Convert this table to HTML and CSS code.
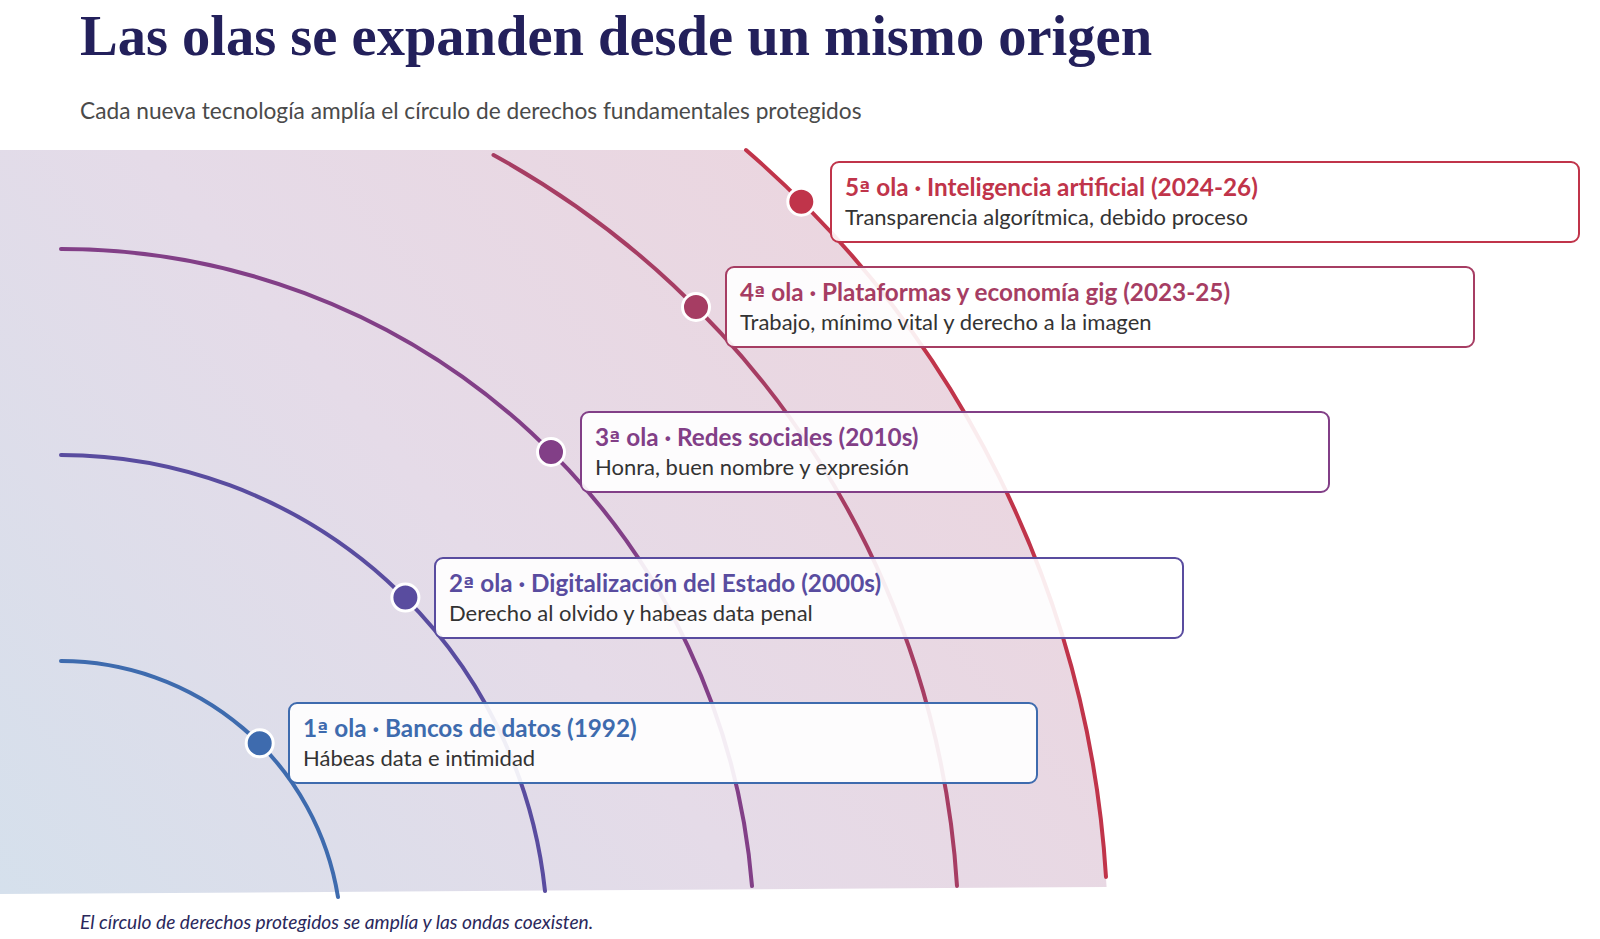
FILE: index.html
```html
<!DOCTYPE html>
<html lang="es">
<head>
<meta charset="utf-8">
<title>Las olas se expanden desde un mismo origen</title>
<link rel="stylesheet" href="styles.css">
</head>
<body>
<div class="page">
  <header class="head">
    <h1 class="title">Las olas se expanden desde un mismo origen</h1>
    <p class="lead">Cada nueva tecnología amplía el círculo de derechos fundamentales protegidos</p>
  </header>

  <div class="chart">
    <svg class="waves" width="1600" height="760" viewBox="0 0 1600 760" xmlns="http://www.w3.org/2000/svg">
      <defs>
        <linearGradient id="bg" gradientUnits="userSpaceOnUse" x1="0" y1="744" x2="900" y2="0">
          <stop offset="0" stop-color="#d5e0ec"/>
          <stop offset="0.5" stop-color="#e5dbe8"/>
          <stop offset="1" stop-color="#ecd5de"/>
        </linearGradient>
      </defs>
      <path d="M0,0 L745.8,0 A1047,1047 0 0,1 1106.6,737 L0,744 Z" fill="url(#bg)"/>
      <g fill="none" stroke-width="4" stroke-linecap="round">
        <path d="M61,511 A281,281 0 0,1 338,747" stroke="#3e6bae"/>
        <path d="M61,305 A487,487 0 0,1 545,741" stroke="#594c9f"/>
        <path d="M61,99 A693,693 0 0,1 752,736" stroke="#823f87"/>
        <path d="M493.5,5 A898,898 0 0,1 957,736" stroke="#a63d63"/>
        <path d="M746,0 A1047,1047 0 0,1 1106,727" stroke="#c0344a"/>
      </g>
      <g stroke="#ffffff" stroke-width="3">
        <circle cx="259.7" cy="593.3" r="13.5" fill="#3e6bae"/>
        <circle cx="405.4" cy="447.6" r="13.5" fill="#594c9f"/>
        <circle cx="551" cy="302" r="13.5" fill="#823f87"/>
        <circle cx="696" cy="157" r="13.5" fill="#a63d63"/>
        <circle cx="801.3" cy="51.7" r="13.5" fill="#c0344a"/>
      </g>
    </svg>

    <div class="card w5">
      <div class="card-title">5<span class="ord">ª</span> ola · Inteligencia artificial (2024-26)</div>
      <div class="card-text">Transparencia algorítmica, debido proceso</div>
    </div>
    <div class="card w4">
      <div class="card-title">4<span class="ord">ª</span> ola · Plataformas y economía gig (2023-25)</div>
      <div class="card-text">Trabajo, mínimo vital y derecho a la imagen</div>
    </div>
    <div class="card w3">
      <div class="card-title">3<span class="ord">ª</span> ola · Redes sociales (2010s)</div>
      <div class="card-text">Honra, buen nombre y expresión</div>
    </div>
    <div class="card w2">
      <div class="card-title">2<span class="ord">ª</span> ola · Digitalización del Estado (2000s)</div>
      <div class="card-text">Derecho al olvido y habeas data penal</div>
    </div>
    <div class="card w1">
      <div class="card-title">1<span class="ord">ª</span> ola · Bancos de datos (1992)</div>
      <div class="card-text">Hábeas data e intimidad</div>
    </div>
  </div>

  <p class="note">El círculo de derechos protegidos se amplía y las ondas coexisten.</p>
</div>
</body>
</html>
```

FILE: styles.css
```css
* {
  box-sizing: border-box;
}

html, body {
  margin: 0;
  padding: 0;
  background: #ffffff;
}

.page {
  width: 1600px;
  height: 939px;
  overflow: hidden;
  font-family: Lato, "Open Sans", "Liberation Sans", sans-serif;
}

.head {
  padding: 4px 0 0 80px;
}

.title {
  margin: 0;
  font-family: "Liberation Serif", "DejaVu Serif", serif;
  font-weight: 700;
  font-size: 56.5px;
  line-height: 64px;
  color: #23205b;
}

.lead {
  margin: 29px 0 0 0;
  font-size: 22.7px;
  line-height: 27px;
  color: #4a4a4a;
}

.chart {
  position: relative;
  height: 744px;
  margin-top: 26px;
}

.waves {
  position: absolute;
  left: 0;
  top: 0;
  overflow: visible;
}

.card {
  position: absolute;
  width: 750px;
  height: 82px;
  padding: 9px 12px 0 13px;
  border: 2px solid;
  border-radius: 9px;
  background: rgba(255, 255, 255, 0.91);
}

.card-title {
  height: 30px;
  font-weight: 700;
  font-size: 24.3px;
  line-height: 30px;
  white-space: nowrap;
}

.ord {
  font-family: "DejaVu Sans", "Open Sans", sans-serif;
  font-size: 0.82em;
  line-height: 0;
}

.card-text {
  margin-top: 0;
  font-size: 22px;
  line-height: 30px;
  color: #333333;
  white-space: nowrap;
}

.w1 { left: 288px; top: 552px; border-color: #3e6bae; }
.w2 { left: 434px; top: 407px; border-color: #594c9f; }
.w3 { left: 580px; top: 261px; border-color: #823f87; }
.w4 { left: 725px; top: 116px; border-color: #a63d63; }
.w5 { left: 830px; top: 11px;  border-color: #c0344a; }

.w1 .card-title { color: #3e6bae; }
.w2 .card-title { color: #594c9f; }
.w3 .card-title { color: #823f87; }
.w4 .card-title { color: #a63d63; }
.w5 .card-title { color: #c0344a; }

.note {
  margin: 16px 0 0 80px;
  font-style: italic;
  font-size: 19.2px;
  line-height: 23px;
  color: #2a285c;
}
```
